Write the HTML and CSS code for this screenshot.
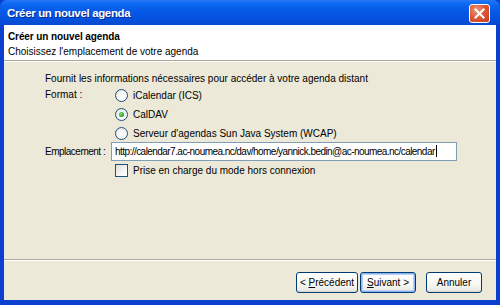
FILE: index.html
```html
<!DOCTYPE html>
<html>
<head>
    <title>Créer un nouvel agenda</title>
    <link rel="stylesheet" href="styles.css">
</head>
<body>
    <div class="window">
        <div class="titlebar">
            <span class="titleText">Créer un nouvel agenda</span>
            <button class="closeButton" type="button" aria-label="Fermer">
                <svg width="19" height="19" viewBox="0 0 19 19">
                    <path d="M5.5 5.5 L13.5 13.5 M13.5 5.5 L5.5 13.5" stroke="#fff" stroke-width="2" stroke-linecap="square" />
                </svg>
            </button>
        </div>

        <div class="frame">
            <div class="header">
                <div class="headerTitle">Créer un nouvel agenda</div>
                <div class="headerSub">Choisissez l'emplacement de votre agenda</div>
            </div>

            <div class="content">
                <p class="intro">Fournit les informations nécessaires pour accéder à votre agenda distant</p>

                <div class="row">
                    <span class="fieldLabel">Format :</span>
                    <div class="options">
                        <label class="option"><span class="radio"></span>iCalendar (ICS)</label>
                        <label class="option"><span class="radio checked"></span>CalDAV</label>
                        <label class="option"><span class="radio"></span>Serveur d'agendas Sun Java System (WCAP)</label>
                    </div>
                </div>

                <div class="row center">
                    <span class="fieldLabel narrow">Emplacement :</span>
                    <div class="textField">http://calendar7.ac-noumea.nc/dav/home/yannick.bedin@ac-noumea.nc/calendar<span class="caret"></span></div>
                </div>

                <div class="row">
                    <span class="fieldLabel"></span>
                    <label class="option"><span class="checkbox"></span>Prise en charge du mode hors connexion</label>
                </div>
            </div>

            <div class="footer">
                <button class="xpButton wide" type="button">&lt; <u>P</u>récédent</button>
                <button class="xpButton focused" type="button"><u>S</u>uivant &gt;</button>
                <button class="xpButton cancel" type="button">Annuler</button>
            </div>
        </div>
    </div>
</body>
</html>
```

FILE: styles.css
```css
body {
    margin: 0;
    width: 500px;
    height: 305px;
    overflow: hidden;
    font-family: "Liberation Sans", Arial, sans-serif;
    font-size: 10px;
    color: #000;
}

.window {
    display: flex;
    flex-direction: column;
    height: 305px;
    background: #0a3fd0;
}

.titlebar {
    height: 25px;
    display: flex;
    align-items: center;
    justify-content: space-between;
    padding: 0 10px 0 7px;
    background: linear-gradient(to bottom, #2a78f0 0%, #1670f8 8%, #0862ec 25%, #0558e6 50%, #0450dc 80%, #0a48d0 100%);
    border-radius: 7px 7px 0 0;
}

.titleText {
    color: #fff;
    font-weight: bold;
    font-size: 11.5px;
    letter-spacing: -0.35px;
    text-shadow: 1px 1px 0 #0a2a90;
}

.closeButton {
    width: 21px;
    height: 19px;
    padding: 0;
    border: 1px solid #fff;
    border-radius: 3px;
    background: radial-gradient(circle at 35% 30%, #f19a80 0%, #dc5a38 45%, #c23a1c 100%);
    display: flex;
    align-items: center;
    justify-content: center;
    margin-top: 2px;
}

    .closeButton svg {
        display: block;
    }

.frame {
    flex: 1;
    display: flex;
    flex-direction: column;
    margin: 0 4px 5px 4px;
    background: #ece9d8;
}

.header {
    height: 31px;
    padding: 4px 0 0 4px;
    background: #fff;
    border-bottom: 1px solid #aca899;
    box-shadow: 0 1px 0 #fff;
}

.headerTitle {
    font-weight: bold;
    font-size: 10px;
    letter-spacing: -0.1px;
    line-height: 15px;
}

.headerSub {
    line-height: 15px;
}

.content {
    flex: 1;
    padding: 11px 0 0 41px;
    border-bottom: 1px solid #aca899;
    box-shadow: 0 1px 0 #fff;
}

.intro {
    margin: 0;
    line-height: 14px;
}

.row {
    display: flex;
    align-items: flex-start;
}

    .row.center {
        align-items: center;
        margin: -1px 0 0 0;
    }

.fieldLabel {
    width: 66px;
    line-height: 18px;
    white-space: nowrap;
    flex-shrink: 0;
}

    .fieldLabel.narrow {
        letter-spacing: -0.5px;
    }

.options {
    display: flex;
    flex-direction: column;
}

.option {
    display: flex;
    align-items: center;
    height: 19px;
    padding-left: 4px;
}

.radio {
    width: 11px;
    height: 11px;
    border: 1px solid #1c5180;
    border-radius: 50%;
    background: radial-gradient(circle at 60% 65%, #fff 0%, #f4f4f0 50%, #dcdcd4 100%);
    margin-right: 5px;
    position: relative;
}

    .radio.checked::after {
        content: "";
        position: absolute;
        left: 3px;
        top: 3px;
        width: 5px;
        height: 5px;
        border-radius: 50%;
        background: radial-gradient(circle at 40% 40%, #8fe08f 0%, #21a121 60%, #1a7a1a 100%);
    }

.checkbox {
    width: 11px;
    height: 11px;
    border: 1px solid #1c5180;
    background: linear-gradient(135deg, #dcdcd7 0%, #f6f6f3 60%, #fff 100%);
    margin-right: 5px;
}

.textField {
    width: 341px;
    height: 17px;
    border: 1px solid #7f9db9;
    background: #fff;
    padding: 0 0 0 3px;
    line-height: 17px;
    letter-spacing: -0.55px;
    white-space: nowrap;
    overflow: hidden;
}

.caret {
    display: inline-block;
    width: 1px;
    height: 12px;
    margin-left: 1px;
    background: #000;
    vertical-align: -2px;
}

.footer {
    height: 40px;
    display: flex;
    align-items: center;
    padding: 4px 14px 0 0;
    box-sizing: border-box;
    justify-content: flex-end;
}

.xpButton {
    height: 21px;
    width: 56px;
    padding: 0;
    font-family: "Liberation Sans", Arial, sans-serif;
    font-size: 10px;
    color: #000;
    border: 1px solid #003c74;
    border-radius: 3px;
    background: linear-gradient(to bottom, #fff 0%, #f7f7f4 60%, #ecebe6 90%, #d6d0c5 100%);
}

    .xpButton.wide {
        width: 62px;
        margin-right: 2px;
    }

    .xpButton.focused {
        box-shadow: inset 0 0 0 1px #8cb4f2, inset 0 0 0 2px #b9d1fa;
    }

    .xpButton.cancel {
        margin-left: 10px;
    }

    .xpButton u {
        text-decoration: underline;
    }
```
